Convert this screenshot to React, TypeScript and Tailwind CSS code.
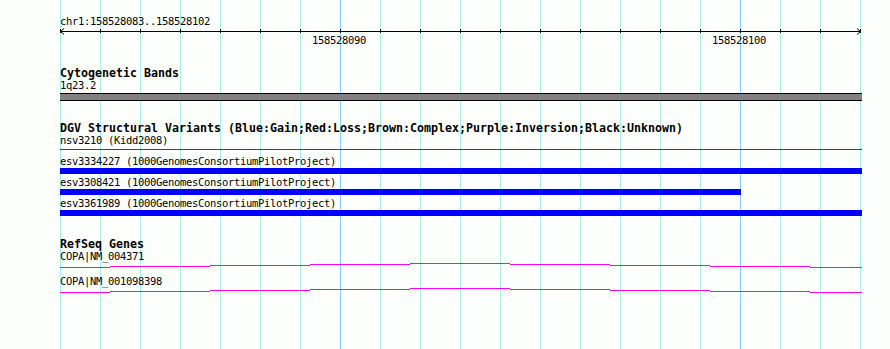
import React from 'react';

const gridXs = Array.from({ length: 21 }, (_, i) => 60 + i * 40);

const variants = [
    { id: 'esv3334227', width: 802 },
    { id: 'esv3308421', width: 681 },
    { id: 'esv3361989', width: 802 },
];

// gene line steps: [x1, x2, dy]
const geneSteps = [
    [0, 50, 4],
    [50, 150, 3],
    [150, 250, 2],
    [250, 350, 1],
    [350, 450, 0],
    [450, 550, 1],
    [550, 650, 2],
    [650, 750, 3],
    [750, 802, 4],
];

function GeneLine() {
    return (
        <svg width="802" height="5" className="block">
            {geneSteps.map(([x1, x2, dy]) => (
                <line key={x1} x1={x1} x2={x2} y1={dy + 0.5} y2={dy + 0.5} stroke="#ff00ff" strokeWidth="1" />
            ))}
        </svg>
    );
}

function Ruler() {
    return (
        <svg width="802" height="6" className="block overflow-visible">
            <line x1="0" x2="801" y1="3.5" y2="3.5" stroke="#000" strokeWidth="1" />
            {gridXs.map((gx) => (
                <line key={gx} x1={gx - 60 + 0.5} x2={gx - 60 + 0.5} y1="1" y2="5" stroke="#000" strokeWidth="1" />
            ))}
            <polyline points="4,0.5 0.5,3.5 4,6.5" fill="none" stroke="#000" strokeWidth="1" />
            <polyline points="797,0.5 800.5,3.5 797,6.5" fill="none" stroke="#000" strokeWidth="1" />
        </svg>
    );
}

export default function App() {
    return (
        <div
            className="relative w-[890px] h-[349px] overflow-hidden bg-[#fdfffd] text-black"
            style={{ fontFamily: "'DejaVu Sans Mono', 'Liberation Mono', monospace" }}
        >
            <svg width="890" height="349" className="absolute inset-0">
                {gridXs.map((gx) => (
                    <line
                        key={gx}
                        x1={gx + 0.5}
                        x2={gx + 0.5}
                        y1="0"
                        y2="349"
                        stroke={gx === 340 || gx === 740 ? '#84d4ee' : '#aaeef2'}
                        strokeWidth="1"
                    />
                ))}
            </svg>

            <div className="relative pl-[60px] w-[862px] text-[10.5px] tracking-[-0.32px]">
                <div className="h-[15px]" />
                <div className="h-[13px] leading-[13px] whitespace-nowrap">chr1:158528083..158528102</div>
                <Ruler />
                <div className="relative h-[13px] leading-[13px]">
                    <span className="absolute left-[252px] top-0">158528090</span>
                    <span className="absolute left-[652px] top-0">158528100</span>
                </div>

                <div className="h-[20px]" />
                <div className="h-[12px] leading-[12px] text-[11.63px] tracking-normal font-bold whitespace-nowrap">Cytogenetic Bands</div>
                <div className="h-[13px] leading-[13px]">1q23.2</div>
                <div className="h-[1px]" />
                <div className="h-[8px] w-[802px] bg-[#828082] border-y border-black" />

                <div className="h-[21px]" />
                <div className="h-[12px] leading-[12px] text-[11.63px] tracking-normal font-bold whitespace-nowrap">
                    DGV Structural Variants (Blue:Gain;Red:Loss;Brown:Complex;Purple:Inversion;Black:Unknown)
                </div>
                <div className="h-[13px] leading-[13px] whitespace-nowrap">nsv3210 (Kidd2008)</div>
                <div className="h-[2px]" />
                <div className="h-[1px] w-[802px] bg-[#e00000]" />
                <div className="h-[5px]" />
                <div className="flex flex-col gap-[2px]">
                    {variants.map((v) => (
                        <div key={v.id}>
                            <div className="h-[13px] leading-[13px] whitespace-nowrap">
                                {v.id} (1000GenomesConsortiumPilotProject)
                            </div>
                            <div className="h-[6px] bg-[#0000ff]" style={{ width: v.width }} />
                        </div>
                    ))}
                </div>

                <div className="h-[22px]" />
                <div className="h-[12px] leading-[12px] text-[11.63px] tracking-normal font-bold whitespace-nowrap">RefSeq Genes</div>
                <div className="h-[13px] leading-[13px] whitespace-nowrap">COPA|NM_004371</div>
                <GeneLine />
                <div className="h-[7px]" />
                <div className="h-[13px] leading-[13px] whitespace-nowrap">COPA|NM_001098398</div>
                <GeneLine />
            </div>
        </div>
    );
}
